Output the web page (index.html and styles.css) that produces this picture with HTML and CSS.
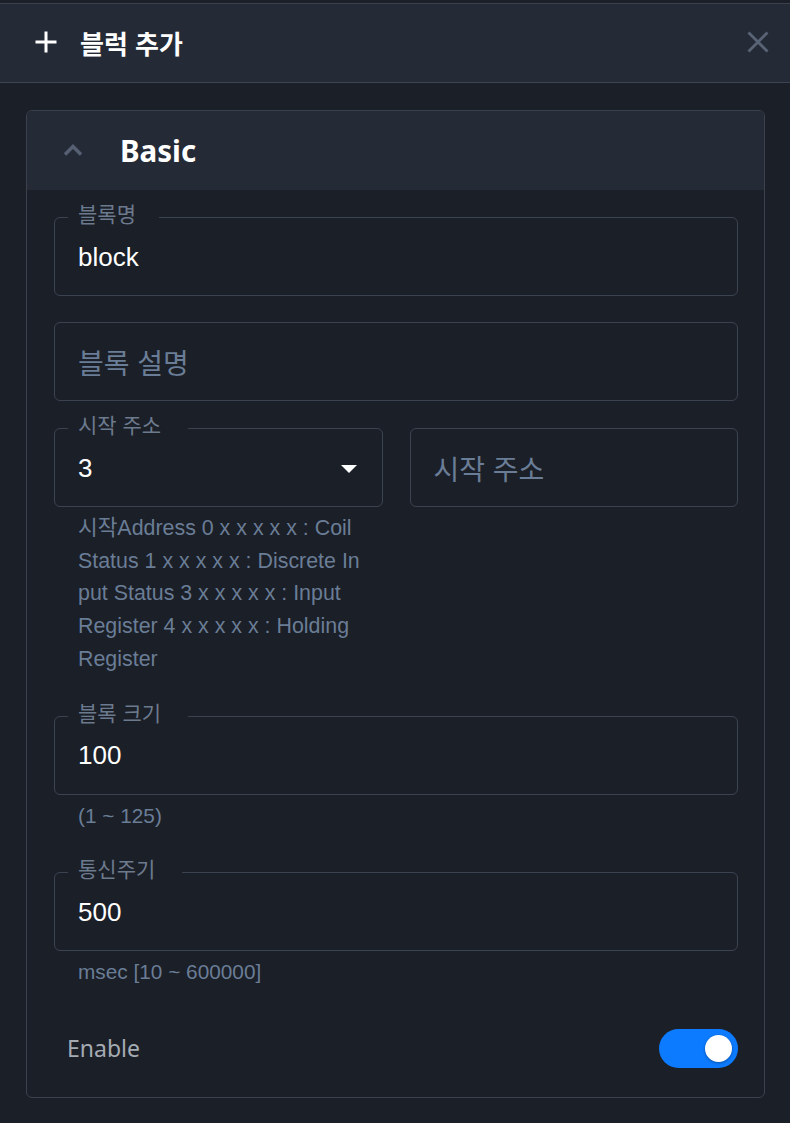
FILE: index.html
```html
<!DOCTYPE html>
<html lang="ko">
<head>
<meta charset="utf-8">
<title>블럭 추가</title>
<link rel="stylesheet" href="styles.css">
</head>
<body>
<div class="topline"></div>
<header class="dialog-header">
  <div class="header-title">
    <svg class="plus-icon" width="24" height="24" viewBox="0 0 24 24"><path d="M12 1.5V22.5M1.5 12H22.5" stroke="#ffffff" stroke-width="3" fill="none"/></svg>
    <span class="title-text">블럭 추가</span>
  </div>
  <svg class="close-icon" width="22" height="22" viewBox="0 0 22 22"><path d="M1.5 1.5L20.5 20.5M20.5 1.5L1.5 20.5" stroke="#586376" stroke-width="2.8" fill="none"/></svg>
</header>

<main class="content">
  <section class="card">
    <div class="card-header">
      <svg class="chevron" width="20" height="12" viewBox="0 0 20 12"><path d="M2 10.5L10 2.5L18 10.5" stroke="#566072" stroke-width="3.4" fill="none"/></svg>
      <span class="card-title">Basic</span>
    </div>
    <div class="card-body">
      <div class="group g-name">
        <div class="field">
          <span class="field-label lbl-short">블록명</span>
          <span class="value">block</span>
        </div>
      </div>

      <div class="group g-desc">
        <div class="field">
          <span class="placeholder">블록 설명</span>
        </div>
      </div>

      <div class="group g-row">
        <div class="col">
          <div class="field select">
            <span class="field-label">시작 주소</span>
            <span class="value">3</span>
            <span class="caret"></span>
          </div>
          <p class="helper helper-long">시작Address 0 x x x x x : Coil<br>Status 1 x x x x x : Discrete In<br>put Status 3 x x x x x : Input<br>Register 4 x x x x x : Holding<br>Register</p>
        </div>
        <div class="col">
          <div class="field">
            <span class="placeholder">시작 주소</span>
          </div>
        </div>
      </div>

      <div class="group g-size">
        <div class="field">
          <span class="field-label">블록 크기</span>
          <span class="value">100</span>
        </div>
        <p class="helper">(1 ~ 125)</p>
      </div>

      <div class="group g-period">
        <div class="field">
          <span class="field-label">통신주기</span>
          <span class="value">500</span>
        </div>
        <p class="helper">msec [10 ~ 600000]</p>
      </div>

      <div class="enable-row">
        <span class="enable-label">Enable</span>
        <span class="switch"><span class="knob"></span></span>
      </div>
    </div>
  </section>
</main>
</body>
</html>
```

FILE: styles.css
```css
* { box-sizing: border-box; }

html, body {
  margin: 0;
  padding: 0;
  background: #1b1f27;
  height: 100%;
}

body {
  width: 790px;
  min-height: 1123px;
  font-family: "Liberation Sans", "Noto Sans CJK KR", sans-serif;
  color: #ffffff;
}

.topline {
  height: 4px;
  background: #1b1f27;
  border-bottom: 1px solid #3a404c;
}

.dialog-header {
  height: 79px;
  background: #252b36;
  border-bottom: 1px solid #3d4554;
  display: flex;
  align-items: center;
  justify-content: space-between;
  padding: 0 21px 2px 34px;
}

.header-title {
  display: flex;
  align-items: center;
}

.plus-icon { display: block; margin-right: 22px; }

.title-text {
  font-family: "Noto Sans CJK KR", sans-serif;
  font-weight: 700;
  font-size: 26px;
  line-height: 30px;
  color: #ffffff;
  margin-top: 2px;
}

.close-icon { display: block; }

.content {
  padding: 27px 25px 26px 26px;
}

.card {
  border: 1px solid #3b424e;
  border-radius: 6px;
  overflow: hidden;
  background: #1b1f27;
}

.card-header {
  height: 79px;
  background: #252b36;
  display: flex;
  align-items: center;
  padding-left: 36px;
}

.chevron { display: block; margin-right: 37px; margin-top: -2px; }

.card-title {
  font-family: "Noto Sans", sans-serif;
  font-weight: 700;
  font-size: 29.5px;
  line-height: 36px;
  color: #ffffff;
}

.card-body {
  padding: 27px 26px 29px 27px;
}

.group { margin: 0; }
.g-name { margin-bottom: 26px; }
.g-desc { margin-bottom: 27px; }
.g-row {
  display: grid;
  grid-template-columns: 1fr 1fr;
  column-gap: 27px;
  margin-bottom: 40px;
}
.g-size { margin-bottom: 40px; }
.g-period { margin-bottom: 40px; }

.field {
  position: relative;
  height: 79px;
  border: 1px solid #3c4350;
  border-radius: 6px;
  display: flex;
  align-items: center;
  padding: 0 23px;
}

.field-label {
  position: absolute;
  top: -16px;
  left: 13px;
  padding: 0 27px 0 10px;
  background: #1b1f27;
  font-family: "Noto Sans CJK KR", sans-serif;
  font-size: 21px;
  line-height: 22px;
  color: #6c7a8e;
  white-space: nowrap;
}

.lbl-short { padding-right: 23px; }

.value {
  font-size: 26px;
  line-height: 30px;
  color: #ffffff;
}

.placeholder {
  font-family: "Noto Sans CJK KR", sans-serif;
  font-size: 28px;
  line-height: 30px;
  color: #6a7d96;
}

.select { padding-right: 25px; justify-content: space-between; }

.caret {
  width: 0;
  height: 0;
  border-left: 8.5px solid transparent;
  border-right: 8.5px solid transparent;
  border-top: 8.5px solid #ffffff;
  margin-top: 2px;
}

.helper {
  margin: 5px 0 0 0;
  padding-left: 24px;
  font-size: 20.8px;
  line-height: 32.7px;
  color: #6a7d96;
  white-space: nowrap;
}

.helper-long { font-size: 21.4px; }

.enable-row {
  display: flex;
  align-items: center;
  justify-content: space-between;
  padding-left: 13px;
}

.enable-label {
  font-family: "Noto Sans", sans-serif;
  font-size: 23px;
  line-height: 30px;
  color: #a5abb3;
}

.switch {
  width: 79px;
  height: 39px;
  border-radius: 20px;
  background: #0d7bff;
  display: flex;
  align-items: center;
  justify-content: flex-end;
  padding-right: 6px;
}

.knob {
  width: 27px;
  height: 27px;
  border-radius: 50%;
  background: #ffffff;
  box-shadow: 0 1px 3px rgba(0, 0, 0, 0.35);
}
```
